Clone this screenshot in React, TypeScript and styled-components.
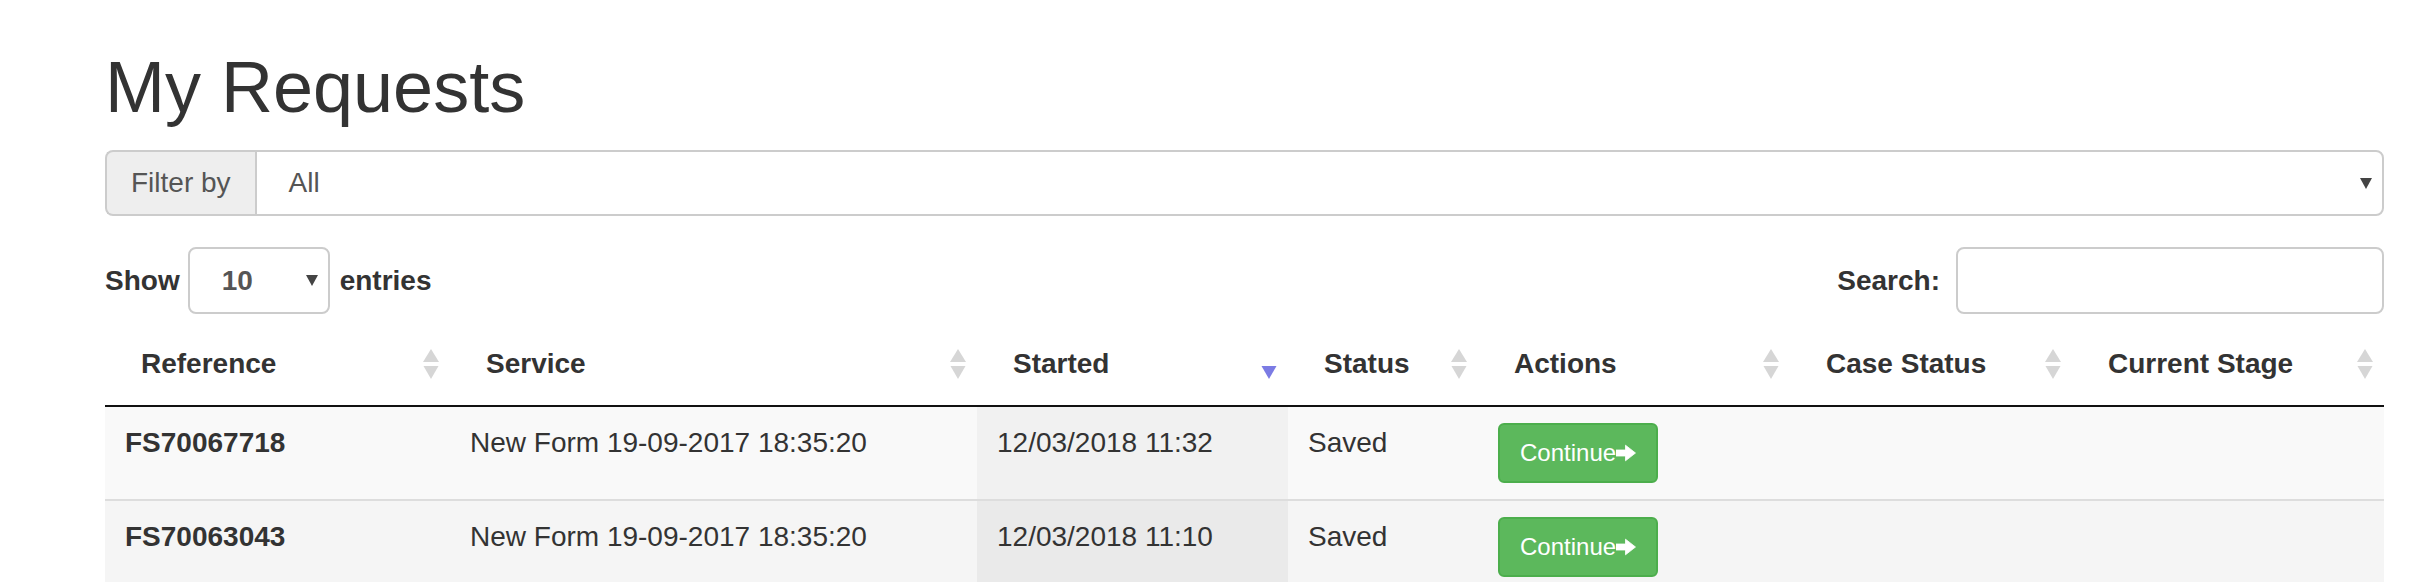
import styled, { createGlobalStyle } from 'styled-components';

const GlobalStyle = createGlobalStyle`
  body {
    margin: 0;
    background: #fff;
    font-family: "Liberation Sans", Arial, sans-serif;
    font-size: 28px;
    line-height: 1.42857;
    color: #333;
  }
  * { box-sizing: border-box; }
`;

const Page = styled.div`
  padding: 0 40px 0 105px;
`;

const Title = styled.h1`
  margin: 48px 0 23px;
  font-size: 72px;
  font-weight: 500;
  line-height: 1.1;
  color: #333;
`;

const FilterBar = styled.div`
  display: flex;
  height: 66px;
`;

const Addon = styled.span`
  display: flex;
  align-items: center;
  padding: 0 24px;
  background: #eee;
  border: 2px solid #ccc;
  border-right: 0;
  border-radius: 8px 0 0 8px;
  color: #555;
`;

const SelectBox = styled.div<{ $rounded: string; $width?: number }>`
  display: flex;
  align-items: center;
  justify-content: space-between;
  ${(p) => (p.$width ? `width: ${p.$width}px;` : 'flex: 1;')}
  height: 100%;
  padding: 0 10px 0 32px;
  border: 2px solid #ccc;
  border-radius: ${(p) => p.$rounded};
  background: #fff;
  color: #555;
`;

const Caret = styled.span`
  width: 0;
  height: 0;
  border-left: 6px solid transparent;
  border-right: 6px solid transparent;
  border-top: 11px solid #444;
`;

const Controls = styled.div`
  display: flex;
  justify-content: space-between;
  align-items: center;
  margin-top: 31px;
  height: 67px;
  font-weight: bold;
`;

const ControlLabel = styled.label`
  display: flex;
  align-items: center;
  height: 100%;
  gap: 8px;
`;

const SearchInput = styled.div`
  width: 428px;
  height: 100%;
  margin-left: 8px;
  border: 2px solid #ccc;
  border-radius: 8px;
`;

const Table = styled.table`
  width: 100%;
  margin-top: 11px;
  border-collapse: collapse;
  table-layout: fixed;
`;

const Th = styled.th<{ $width: number }>`
  width: ${(p) => p.$width}px;
  padding: 19px 11px 21px 36px;
  border-bottom: 2px solid #111;
  text-align: left;
  font-weight: bold;
`;

const HeadInner = styled.div`
  display: flex;
  align-items: center;
  justify-content: space-between;
`;

const Tr = styled.tr`
  & + & > td {
    border-top: 2px solid #ddd;
  }
`;

const Td = styled.td<{ $sorted?: boolean; $hover?: boolean; $bold?: boolean }>`
  padding: 16px 20px;
  vertical-align: top;
  font-weight: ${(p) => (p.$bold ? 'bold' : 'normal')};
  background: ${(p) =>
    p.$sorted ? (p.$hover ? '#eaeaea' : '#f1f1f1') : p.$hover ? '#f5f5f5' : '#f9f9f9'};
`;

const ContinueButton = styled.button`
  display: inline-flex;
  align-items: center;
  height: 60px;
  padding: 0 20px;
  font-family: inherit;
  font-size: 24px;
  line-height: 1.5;
  color: #fff;
  background: #5cb85c;
  border: 2px solid #4cae4c;
  border-radius: 6px;
`;

type SortState = 'both' | 'desc';

function SortIcon({ state }: { state: SortState }) {
  return (
    <svg width="16" height="30" viewBox="0 0 16 30">
      {state === 'both' && <polygon points="8,0 16,13 0,13" fill="#d6d6d6" />}
      <polygon
        points="0.5,17 15.5,17 8,30"
        fill={state === 'desc' ? '#7b7be4' : '#d6d6d6'}
      />
    </svg>
  );
}

function ArrowRight() {
  return (
    <svg width="20" height="20" viewBox="0 0 20 20">
      <path
        d="M0 7h9.5V2.2L19.5 10 9.5 17.8V13H0z"
        fill="#fff"
        stroke="#fff"
        strokeWidth="0.8"
        strokeLinejoin="round"
      />
    </svg>
  );
}

const columns: { label: string; width: number; sort: SortState }[] = [
  { label: 'Reference', width: 345, sort: 'both' },
  { label: 'Service', width: 527, sort: 'both' },
  { label: 'Started', width: 311, sort: 'desc' },
  { label: 'Status', width: 190, sort: 'both' },
  { label: 'Actions', width: 312, sort: 'both' },
  { label: 'Case Status', width: 282, sort: 'both' },
  { label: 'Current Stage', width: 312, sort: 'both' },
];

const rows = [
  { ref: 'FS70067718', service: 'New Form 19-09-2017 18:35:20', started: '12/03/2018 11:32', status: 'Saved' },
  { ref: 'FS70063043', service: 'New Form 19-09-2017 18:35:20', started: '12/03/2018 11:10', status: 'Saved' },
];

export default function App() {
  return (
    <Page>
      <GlobalStyle />
      <Title>My Requests</Title>
      <FilterBar>
        <Addon>Filter by</Addon>
        <SelectBox $rounded="0 8px 8px 0">
          <span>All</span>
          <Caret />
        </SelectBox>
      </FilterBar>

      <Controls>
        <ControlLabel>
          Show
          <SelectBox $rounded="8px" $width={142}>
            <span>10</span>
            <Caret />
          </SelectBox>
          <span style={{ marginLeft: 2 }}>entries</span>
        </ControlLabel>
        <ControlLabel>
          Search:
          <SearchInput />
        </ControlLabel>
      </Controls>

      <Table>
        <thead>
          <tr>
            {columns.map((c) => (
              <Th key={c.label} $width={c.width}>
                <HeadInner>
                  <span>{c.label}</span>
                  <SortIcon state={c.sort} />
                </HeadInner>
              </Th>
            ))}
          </tr>
        </thead>
        <tbody>
          {rows.map((r, i) => {
            const hover = i === 1;
            return (
              <Tr key={r.ref}>
                <Td $hover={hover} $bold>{r.ref}</Td>
                <Td $hover={hover}>{r.service}</Td>
                <Td $hover={hover} $sorted>{r.started}</Td>
                <Td $hover={hover}>{r.status}</Td>
                <Td $hover={hover}>
                  <ContinueButton>
                    Continue
                    <ArrowRight />
                  </ContinueButton>
                </Td>
                <Td $hover={hover} />
                <Td $hover={hover} />
              </Tr>
            );
          })}
        </tbody>
      </Table>
    </Page>
  );
}
